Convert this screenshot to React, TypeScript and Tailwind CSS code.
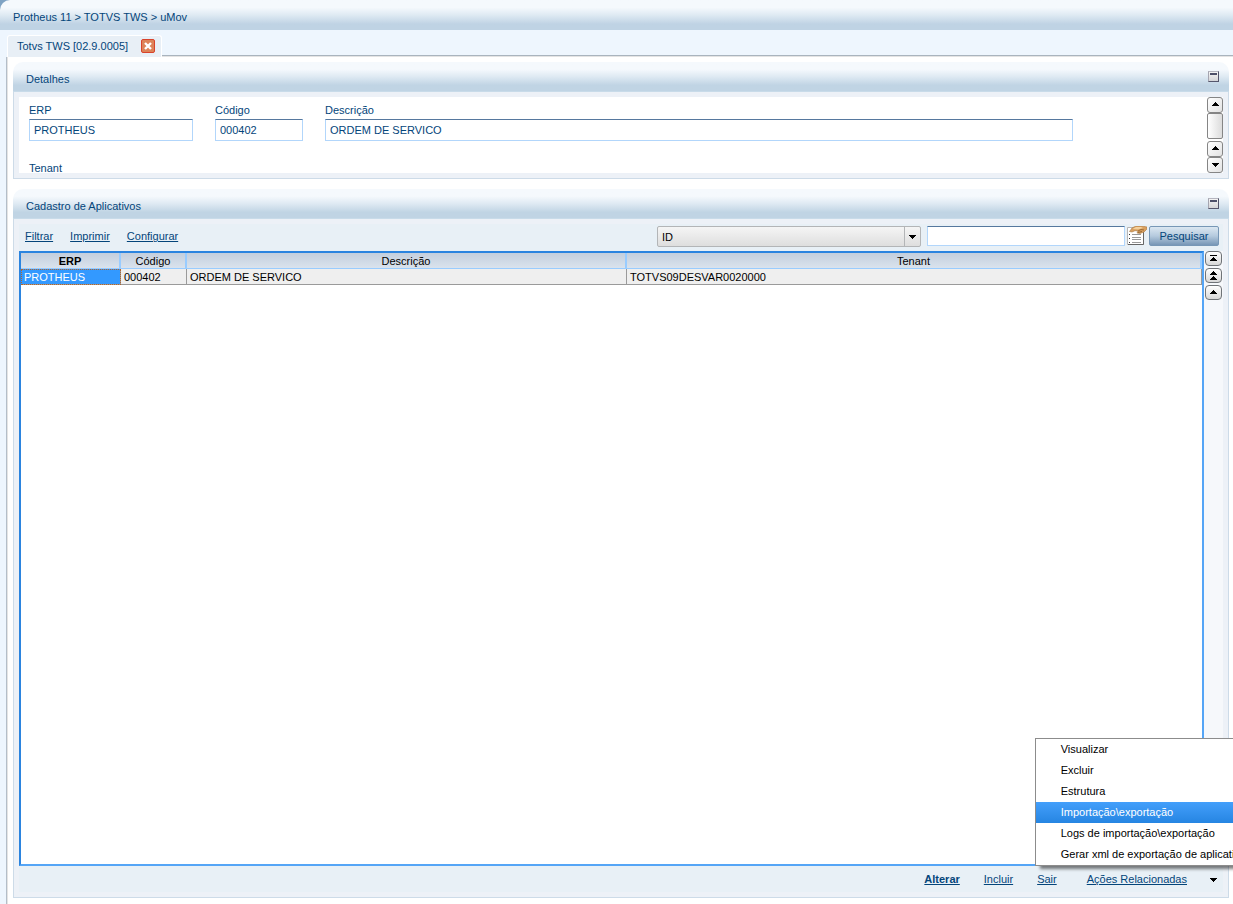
import React from "react";

type IconKind = "up" | "down" | "double" | "top";

function Arrow({ kind }: { kind: IconKind }) {
  return (
    <svg width="9" height="9" viewBox="0 0 9 9" shapeRendering="crispEdges" aria-hidden="true">
      {kind === "up" && <path d="M4 2h1v1h1v1h1v1h1v1H1V5h1V4h1V3h1z" />}
      {kind === "down" && <path d="M1 3h7v1H7v1H6v1H5v1H4V6H3V5H2V4H1z" />}
      {kind === "double" && (
        <path d="M4 0h1v1h1v1h1v1h1v1H1V3h1V2h1V1h1zM4 5h1v1h1v1h1v1h1v1H1V8h1V7h1V6h1z" />
      )}
      {kind === "top" && <path d="M1 1h7v1H1zM4 3h1v1h1v1h1v1h1v1H1V6h1V5h1V4h1z" />}
    </svg>
  );
}

function ScrollButton({ kind, label }: { kind: IconKind; label: string }) {
  return (
    <button
      aria-label={label}
      className="flex h-4 w-4 shrink-0 items-start justify-center rounded-[3px] border border-[#858585] bg-linear-to-br from-white to-[#e2e2e2] pt-[2px]"
    >
      <Arrow kind={kind} />
    </button>
  );
}

function NavButton({ kind, label }: { kind: IconKind; label: string }) {
  return (
    <button
      aria-label={label}
      className="flex h-[15px] w-[17px] items-center justify-center rounded-[4px] border border-[#6f7377] bg-linear-to-b from-white to-[#d8d8d8]"
    >
      <Arrow kind={kind} />
    </button>
  );
}

function Panel({ title, grow, children }: { title: string; grow?: boolean; children: React.ReactNode }) {
  return (
    <section className={grow ? "flex min-h-0 flex-1 flex-col" : "flex flex-col"}>
      <header className="flex h-[30px] items-center justify-between rounded-t-[10px] border-b border-[#c8dbe9] bg-linear-to-b from-[#f5f9fd] from-25% via-[#dfeaf3] via-50% to-[#c0d4e4] to-80% pr-[10px] pl-[13px]">
        <h2 className="pt-1">{title}</h2>
        <button
          aria-label={"Minimizar " + title}
          className="h-[11px] w-[11px] border border-t-[#b5b5bf] border-r-[#55566c] border-b-[#55566c] border-l-[#a5a5b0] bg-linear-to-b from-[#f4f4f4] to-[#d5d5d8] p-px"
        >
          <span className="mb-[6px] block h-[2px] bg-[#4c4f68]" />
        </button>
      </header>
      <div className="flex flex-1 flex-col border border-t-0 border-[#cddbe8] bg-[#edf1f7] p-[5px]">{children}</div>
    </section>
  );
}

function Field({ id, label, value, className }: { id: string; label: string; value: string; className: string }) {
  return (
    <div className={className}>
      <label htmlFor={id} className="mb-px block h-4 leading-4">
        {label}
      </label>
      <input
        id={id}
        defaultValue={value}
        className="block h-[22px] w-full border border-[#b2d6fb] border-t-[#56789e] bg-white px-1 outline-none"
      />
    </div>
  );
}

const linkClass = "underline underline-offset-1 decoration-1";
const headCell = "border-r-2 border-b border-[#99ccff] p-0";
const bodyCell = "border-r border-b border-[#9a9a9a] p-0 pl-[3px]";

const menu = [
  "Visualizar",
  "Excluir",
  "Estrutura",
  "Importação\\exportação",
  "Logs de importação\\exportação",
  "Gerar xml de exportação de aplicativos",
];

export default function App() {
  return (
    <div className="flex min-h-screen flex-col overflow-hidden bg-[#eef6fe] font-['Liberation_Sans',Arial,sans-serif] text-[11px] leading-4 text-[#04457a]">
      <div className="bg-[#7fa3c4]">
        <nav className="flex h-[30px] items-center rounded-tl-[10px] bg-linear-to-b from-[#f5f9fd] from-25% via-[#dfeaf3] via-50% to-[#bfd3e4] to-80% pt-[3px] pl-[13px]">
          Protheus 11 &gt; TOTVS TWS &gt; uMov
        </nav>
      </div>

      <div className="flex h-[27px] items-end pl-[7px]">
        <div className="flex h-[22px] w-[155px] items-center justify-between rounded-t-[3px] border border-b-0 border-white bg-[#e8eff6] pr-[6px] pb-px pl-[9px]">
          <span>Totvs TWS [02.9.0005]</span>
          <button
            aria-label="Fechar aba"
            className="flex h-[14px] w-[14px] items-center justify-center rounded-[2px] border border-[#d9432b] bg-[#dd8359]"
          >
            <svg width="8" height="8" viewBox="0 0 8 8" aria-hidden="true">
              <path d="M1 1l6 6M7 1l-6 6" stroke="#fff" strokeWidth="2.4" />
            </svg>
          </button>
        </div>
        <div className="h-[2px] flex-1 border-t border-[#a9b4be] bg-[#e4e4e4]" />
      </div>

      <div className="ml-[6px] flex flex-1 flex-col gap-[10px] border-l border-[#b4bec9] bg-white pt-[5px] pr-1 pb-[6px] pl-[6px] shadow-[inset_1px_0_0_#e4e4e4]">
        <Panel title="Detalhes">
          <div className="flex h-[76px] overflow-hidden bg-white">
            <div className="flex-1 pt-[5px] pl-[10px]">
              <div className="flex gap-[22px]">
                <Field id="erp" label="ERP" value="PROTHEUS" className="w-[164px]" />
                <Field id="codigo" label="Código" value="000402" className="w-[88px]" />
                <Field id="descricao" label="Descrição" value="ORDEM DE SERVICO" className="mr-[134px] flex-1" />
              </div>
              <p className="mt-[19px]">Tenant</p>
            </div>
            <div className="flex w-4 flex-col">
              <ScrollButton kind="up" label="Rolar para cima" />
              <div className="mb-[2px] flex-1 rounded-[2px] border border-[#858585] bg-linear-to-r from-white to-[#dcdcdc]" />
              <ScrollButton kind="up" label="Linha anterior" />
              <ScrollButton kind="down" label="Próxima linha" />
            </div>
          </div>
        </Panel>

        <Panel title="Cadastro de Aplicativos" grow>
          <div className="flex h-[27px] items-start bg-[#e8f0f6] pt-[2px] pr-1 pl-[6px]">
            <div className="flex flex-1 gap-[17px] pt-[2px]">
              <a href="#filtrar" className={linkClass}>Filtrar</a>
              <a href="#imprimir" className={linkClass}>Imprimir</a>
              <a href="#configurar" className={linkClass}>Configurar</a>
            </div>
            <div className="relative mr-[6px] w-[264px]">
              <select
                aria-label="Campo de pesquisa"
                className="block h-[21px] w-full appearance-none rounded-[2px] border border-[#b3b5b7] bg-linear-to-b from-[#f5f5f5] to-[#dedede] pl-1 text-black"
              >
                <option>ID</option>
              </select>
              <span className="pointer-events-none absolute inset-y-px right-px flex w-4 items-center justify-center border-l border-[#b3b5b7]">
                <Arrow kind="down" />
              </span>
            </div>
            <input
              aria-label="Texto da pesquisa"
              className="mr-[2px] h-5 w-[198px] border border-[#b2d6fb] border-t-[#56789e] bg-white px-1 outline-none"
            />
            <button aria-label="Opções de pesquisa" className="mr-[2px] h-5 w-5">
              <svg width="20" height="20" viewBox="0 0 20 20" aria-hidden="true">
                <path d="M.5 1.500h16v17h-16z" fill="#fff" stroke="#b5b5b5" />
                <path d="M16.500 5v13.500H1" fill="none" stroke="#666" />
                <path d="M5 8.500h9M5 11.500h9M5 13.500h9M5 16.500h9" stroke="#999" />
                <path d="M2 8.500h1M2 12.500h1M2 16.500h1" stroke="#333" />
                <path
                  d="M2.500 5.500L5 2 9 0h6l5 1v2l-3 3-4 1.500-3-.5 1-2-3-.3-3 1.300z"
                  fill="#d99f5e"
                  stroke="#a87843"
                  strokeWidth=".6"
                />
                <path d="M5.500 3L9 1h5l2 1-5 1.500z" fill="#f4d09b" />
                <path d="M11 5l3-1.500 3 .5M11 6.500l4-1" fill="none" stroke="#805525" strokeWidth=".7" />
              </svg>
            </button>
            <button className="h-5 w-[70px] rounded-[2px] border border-[#7797b6] bg-linear-to-b from-[#dbe7f1] via-[#b5cade] to-[#7796b6]">
              Pesquisar
            </button>
          </div>

          <div className="flex flex-1 bg-[#f6f8fb]">
            <div className="flex-1 border-2 border-[#55a5f6] border-t-[#2b84df] border-l-[#2b84df] bg-white">
              <table className="w-full table-fixed border-separate border-spacing-0 text-black">
                <colgroup>
                  <col className="w-[100px]" />
                  <col className="w-[66px]" />
                  <col className="w-[440px]" />
                  <col />
                </colgroup>
                <thead>
                  <tr className="h-4 bg-linear-to-b from-[#c4cfdd] to-[#dbe4ee] leading-[14px]">
                    <th className={headCell + " font-bold"}>ERP</th>
                    <th className={headCell + " font-normal"}>Código</th>
                    <th className={headCell + " font-normal"}>Descrição</th>
                    <th className={headCell + " font-normal"}>Tenant</th>
                  </tr>
                </thead>
                <tbody>
                  <tr className="h-4 bg-[#efefef] leading-[14px]">
                    <td className={bodyCell + " bg-[#3399ff] text-white outline-1 -outline-offset-1 outline-dotted outline-[#b0652e]"}>
                      PROTHEUS
                    </td>
                    <td className={bodyCell}>000402</td>
                    <td className={bodyCell}>ORDEM DE SERVICO</td>
                    <td className={bodyCell}>TOTVS09DESVAR0020000</td>
                  </tr>
                </tbody>
              </table>
            </div>
            <div className="flex w-[19px] flex-col items-center gap-[2px]">
              <NavButton kind="top" label="Primeiro registro" />
              <NavButton kind="double" label="Página anterior" />
              <NavButton kind="up" label="Registro anterior" />
            </div>
          </div>

          <footer className="flex h-[26px] items-center justify-end bg-[#e8f0f6] pr-[5px]">
            <a href="#alterar" className={linkClass + " mr-6 font-bold"}>Alterar</a>
            <a href="#incluir" className={linkClass + " mr-6"}>Incluir</a>
            <a href="#sair" className={linkClass + " mr-[30px]"}>Sair</a>
            <div className="relative flex items-center gap-[22px]">
              <button className={linkClass}>Ações Relacionadas</button>
              <Arrow kind="down" />
              <ul
                role="menu"
                className="absolute bottom-[21px] -left-[52px] w-[260px] border border-[#8c8c8c] bg-white text-black shadow-[5px_3px_3px_rgba(0,0,0,0.5)]"
              >
                {menu.map((item, i) => (
                  <li key={item} role="none">
                    <button
                      role="menuitem"
                      className={
                        i === 3
                          ? "block h-[21px] w-full bg-linear-to-b from-[#439ffb] to-[#2585e2] pb-[2px] pl-[25px] text-left text-white"
                          : "block h-[21px] w-full pb-[2px] pl-[25px] text-left"
                      }
                    >
                      {item}
                    </button>
                  </li>
                ))}
              </ul>
            </div>
          </footer>
        </Panel>
      </div>
    </div>
  );
}
